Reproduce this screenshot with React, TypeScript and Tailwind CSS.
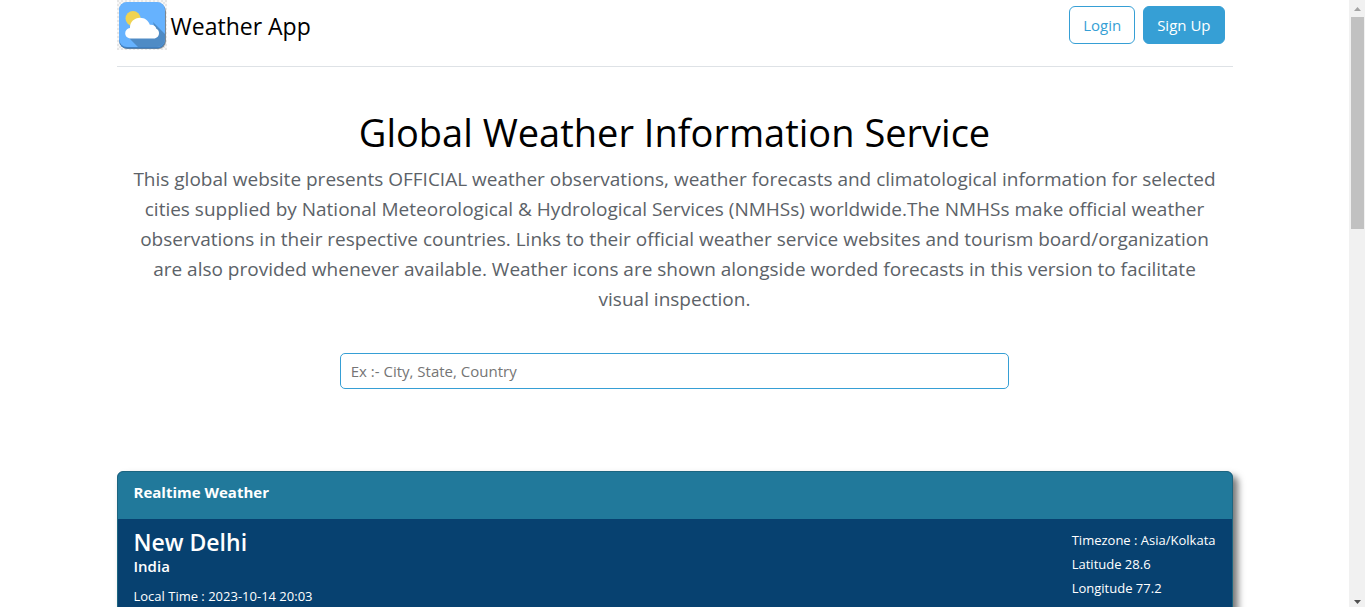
function Logo() {
  return (
    <svg viewBox="0 0 50 50" className="size-[50px] shrink-0" aria-hidden="true">
      <defs>
        <pattern id="checks" width="4" height="4" patternUnits="userSpaceOnUse">
          <rect width="4" height="4" fill="#f8f8f8" />
          <rect width="2" height="2" fill="#e6e6e6" />
          <rect x="2" y="2" width="2" height="2" fill="#e6e6e6" />
        </pattern>
        <clipPath id="tile">
          <rect x="2" y="2" width="46" height="45" rx="8" />
        </clipPath>
      </defs>
      <rect width="50" height="50" fill="url(#checks)" />
      <rect x="2.5" y="3.5" width="46.5" height="45.5" rx="8" fill="#7d8790" />
      <rect x="2" y="2.5" width="46" height="46" rx="8" fill="#3f7fc0" />
      <g clipPath="url(#tile)">
        <rect x="2" y="2" width="46" height="45" fill="#66b2fe" />
        <path d="M10 36 L22 48 H49 V35 L36 22 L40 36 Z" fill="#4f8bc5" />
      </g>
      <circle cx="16" cy="18.5" r="7.5" fill="#efd352" />
      <path
        d="M14 38.500C10.500 38.500 8.200 36 8.200 33.200C8.200 30.400 10.300 28.300 13 28C12.800 22 17.500 17.800 23 17.800C27.800 17.800 31.500 20.600 32.800 24.800C36.500 24.300 39 26.500 39.300 28.700C41.200 29.300 42 31.200 42 33C42 36.200 39.700 38.500 36.800 38.500Z"
        fill="#ffffff"
      />
    </svg>
  );
}

function Header() {
  return (
    <header className="flex items-start justify-between border-b border-[#dee2e6] pb-4">
      <a href="#" className="flex items-center gap-1 text-black">
        <Logo />
        <span className="pt-[2px] text-[23px] leading-7">Weather App</span>
      </a>
      <nav className="mt-[6px] mr-2 flex gap-2 text-[15px] leading-6">
        <button type="button" className="h-[38px] rounded-md border border-[#369fd5] px-[13px] text-[#369fd5]">
          Login
        </button>
        <button type="button" className="h-[38px] rounded-md border border-[#369fd5] bg-[#369fd5] px-[13px] text-white">
          Sign Up
        </button>
      </nav>
    </header>
  );
}

function Intro() {
  return (
    <section className="px-3 pt-[41px] text-center">
      <h1 className="text-[38px] leading-12 text-black">Global Weather Information Service</h1>
      <p className="mt-2 text-[19px] leading-[30px] text-[#5c6268]">
        This global website presents OFFICIAL weather observations, weather forecasts and climatological
        information for selected cities supplied by National Meteorological &amp; Hydrological Services
        (NMHSs) worldwide.The NMHSs make official weather observations in their respective countries. Links
        to their official weather service websites and tourism board/organization are also provided whenever
        available. Weather icons are shown alongside worded forecasts in this version to facilitate visual
        inspection.
      </p>
    </section>
  );
}

function Search() {
  return (
    <form className="mx-auto mt-[39px] w-3/5">
      <input
        type="text"
        aria-label="Location"
        placeholder="Ex :- City, State, Country"
        className="block h-9 w-full rounded-[5px] border border-[#369fd5] bg-white px-[10px] text-[15px] text-black outline-none placeholder:text-[#757575]"
      />
    </form>
  );
}

function RealtimeCard() {
  return (
    <article className="mt-[82px] h-[480px] rounded-md border border-[#1c6580] bg-[#074170] text-white shadow-[5px_5px_7px_#777]">
      <h2 className="h-[47px] rounded-t-[5px] bg-[#21799b] px-4 pt-2 text-[15px] leading-6 font-bold">
        Realtime Weather
      </h2>
      <div className="flex justify-between px-4 pt-[9px] text-[13px] leading-6">
        <div>
          <h3 className="text-[23px] leading-7 font-semibold">New Delhi</h3>
          <p className="text-[15px] leading-5 font-semibold">India</p>
          <p className="mt-2">Local Time : 2023-10-14 20:03</p>
        </div>
        <div>
          <p>Timezone : Asia/Kolkata</p>
          <p>Latitude 28.6</p>
          <p>Longitude 77.2</p>
        </div>
      </div>
    </article>
  );
}

function Scrollbar() {
  return (
    <div className="flex w-4 shrink-0 flex-col bg-[#f1f1f1]" aria-hidden="true">
      <svg viewBox="0 0 16 17" className="h-[17px] w-4">
        <path d="M5 11H12L8.500 7Z" fill="#a3a3a3" />
      </svg>
      <div className="ml-[2px] h-[212px] w-[13px] bg-[#c1c1c1]" />
      <svg viewBox="0 0 16 17" className="mt-auto h-[17px] w-4">
        <path d="M5 10H12L8.500 14Z" fill="#505050" />
      </svg>
    </div>
  );
}

export default function App() {
  return (
    <div className="flex h-screen overflow-hidden bg-white font-['Open_Sans','Noto_Sans',sans-serif]">
      <div className="min-w-0 flex-1 overflow-hidden">
        <main className="mx-auto max-w-[1140px] px-3">
          <Header />
          <Intro />
          <Search />
          <RealtimeCard />
        </main>
      </div>
      <Scrollbar />
    </div>
  );
}
